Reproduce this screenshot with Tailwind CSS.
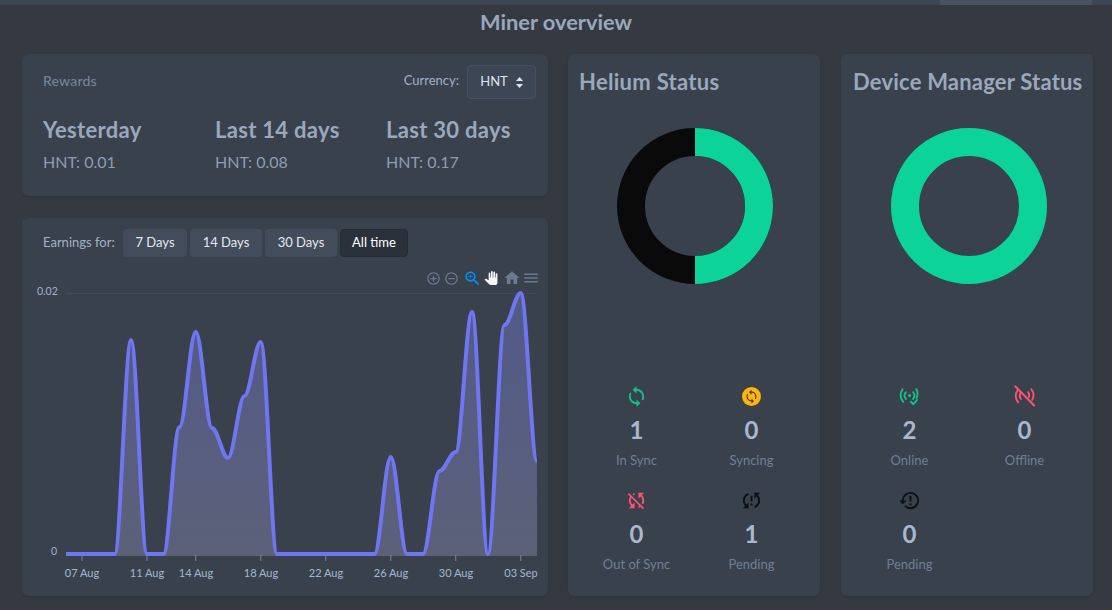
<!DOCTYPE html>
<html lang="en">
<head>
  <meta charset="UTF-8" />
  <title>Miner overview</title>
  <script src="https://cdn.jsdelivr.net/npm/@tailwindcss/browser@4"></script>
</head>
<body class="h-[610px] overflow-hidden bg-[#353a42] font-[family-name:Lato,sans-serif]">

  <!-- top bar -->
  <div class="h-[5px] bg-[#3b4753] pl-[940px]"><div class="h-full w-[152px] bg-[#4a5262]"></div></div>

  <h1 class="h-[49px] pt-[2px] text-center text-[21.8px] leading-[30px] font-bold text-[#9ba8bc]">Miner overview</h1>

  <main class="flex pl-[22px]">
    <div class="flex w-[526px] flex-col gap-[22px]">

      <!-- rewards -->
      <section class="h-[142px] rounded-md bg-[#39414d] pl-[21px] pr-3 pt-[11px] shadow-sm">
        <div class="flex h-[34px] items-center">
          <span class="mb-[3px] text-[14px] font-medium tracking-[.2px] text-[#74849a]">Rewards</span>
          <span class="mb-[2px] ml-auto text-[13px] text-[#a3b1c6]">Currency:</span>
          <div class="ml-2 flex h-[34px] w-[69px] items-center justify-center gap-2 rounded border border-[#465060] bg-[#3d4654] text-[13px] text-[#dfe5ee]">
            HNT
            <svg width="7" height="11" viewBox="0 0 7 11"><path d="M3.5 0 7 4H0zM3.5 11 0 7h7z" fill="#dfe5ee"/></svg>
          </div>
        </div>
        <div class="mt-[16px] grid grid-cols-[172px_171px_1fr]">
          <div>
            <h3 class="text-[22px] leading-[30px] font-bold tracking-[.3px] text-[#9ba8bc]">Yesterday</h3>
            <p class="mt-[5px] text-[16px] leading-[24px] text-[#8e9cb1]">HNT: 0.01</p>
          </div>
          <div>
            <h3 class="text-[22px] leading-[30px] font-bold tracking-[.3px] text-[#9ba8bc]">Last 14 days</h3>
            <p class="mt-[5px] text-[16px] leading-[24px] text-[#8e9cb1]">HNT: 0.08</p>
          </div>
          <div>
            <h3 class="text-[22px] leading-[30px] font-bold tracking-[.3px] text-[#9ba8bc]">Last 30 days</h3>
            <p class="mt-[5px] text-[16px] leading-[24px] text-[#8e9cb1]">HNT: 0.17</p>
          </div>
        </div>
      </section>

      <!-- earnings chart -->
      <section class="h-[378px] rounded-md bg-[#39414d] pt-[11px] shadow-sm">
        <div class="flex h-[28px] items-center pl-[21px] text-[13px]">
          <span class="w-[80px] text-[#a3b1c6]">Earnings for:</span>
          <div class="flex gap-[3px] text-[#e4e9f0]">
            <button class="h-[28px] w-[64px] rounded-sm bg-[#434c5a]">7 Days</button>
            <button class="h-[28px] w-[72px] rounded-sm bg-[#434c5a]">14 Days</button>
            <button class="h-[28px] w-[72px] rounded-sm bg-[#434c5a]">30 Days</button>
            <button class="h-[28px] w-[68px] rounded-sm border border-[#262b33] bg-[#2b313a] text-white">All time</button>
          </div>
        </div>

        <svg class="mt-[5px] block" width="526" height="334" viewBox="22 262 526 334">
          <defs>
            <linearGradient id="area" x1="0" y1="0" x2="0" y2="1">
              <stop offset="0" stop-color="#525a88"/>
              <stop offset="1" stop-color="#5c6179"/>
            </linearGradient>
          </defs>

          <!-- toolbar -->
          <svg x="426" y="271" width="15" height="15" viewBox="0 0 24 24" fill="#6b7a8f"><path d="M13 7h-2v4H7v2h4v4h2v-4h4v-2h-4V7zm-1-5C6.48 2 2 6.48 2 12s4.48 10 10 10 10-4.48 10-10S17.52 2 12 2zm0 18c-4.41 0-8-3.59-8-8s3.59-8 8-8 8 3.59 8 8-3.59 8-8 8z"/></svg>
          <svg x="444" y="271" width="15" height="15" viewBox="0 0 24 24" fill="#6b7a8f"><path d="M7 11v2h10v-2H7zm5-9C6.48 2 2 6.48 2 12s4.48 10 10 10 10-4.48 10-10S17.52 2 12 2zm0 18c-4.41 0-8-3.59-8-8s3.59-8 8-8 8 3.59 8 8-3.59 8-8 8z"/></svg>
          <svg x="463" y="269" width="19" height="19" viewBox="0 0 24 24" fill="#008ffb"><path d="M15.5 14h-.79l-.28-.27C15.41 12.59 16 11.11 16 9.5 16 5.91 13.09 3 9.5 3S3 5.91 3 9.5 5.91 16 9.5 16c1.61 0 3.09-.59 4.23-1.57l.27.28v.79l5 4.99L20.49 19l-4.99-5zm-6 0C7.01 14 5 11.99 5 9.5S7.01 5 9.5 5 14 7.01 14 9.5 11.99 14 9.5 14z"/><path d="M12 10h-2v2H9v-2H7V9h2V7h1v2h2v1z"/></svg>
          <svg x="484" y="271" width="14" height="14" viewBox="0 0 24 24" fill="#f4f6f8"><path d="M23 5.5V20c0 2.2-1.8 4-4 4h-7.3c-1.08 0-2.1-.43-2.85-1.19L1 14.83s1.26-1.23 1.3-1.25c.22-.19.49-.29.79-.29.22 0 .42.06.6.16.04.01 4.31 2.46 4.31 2.46V4c0-.83.67-1.5 1.5-1.5S11 3.17 11 4v7h1V1.5c0-.83.67-1.5 1.5-1.5S15 .67 15 1.5V11h1V2.5c0-.83.67-1.5 1.5-1.5s1.5.67 1.5 1.5V11h1V5.5c0-.83.67-1.5 1.5-1.5s1.5.67 1.5 1.5z"/></svg>
          <svg x="503" y="269" width="18" height="18" viewBox="0 0 24 24" fill="#6b7a8f"><path d="M10 20v-6h4v6h5v-8h3L12 3 2 12h3v8z"/></svg>
          <svg x="522" y="269" width="18" height="18" viewBox="0 0 24 24" fill="#6b7a8f"><path d="M3 18h18v-2H3v2zm0-5h18v-2H3v2zm0-7v2h18V6H3z"/></svg>

          <!-- grid and axes -->
          <line x1="66" y1="293.5" x2="537" y2="293.5" stroke="#434b58"/>
          <line x1="66" y1="555" x2="537" y2="555" stroke="#7f8794"/>
          <g stroke="#7f8794">
            <line x1="82" y1="555" x2="82" y2="561"/>
            <line x1="147" y1="555" x2="147" y2="561"/>
            <line x1="195.75" y1="555" x2="195.75" y2="561"/>
            <line x1="260.75" y1="555" x2="260.75" y2="561"/>
            <line x1="325.75" y1="555" x2="325.75" y2="561"/>
            <line x1="390.75" y1="555" x2="390.75" y2="561"/>
            <line x1="455.75" y1="555" x2="455.75" y2="561"/>
            <line x1="520.75" y1="555" x2="520.75" y2="561"/>
          </g>
          <g font-size="10.5" fill="#a3b1c6">
            <text x="37" y="295">0.02</text>
            <text x="51" y="555">0</text>
          </g>
          <g font-size="11" fill="#a3b8d0" text-anchor="middle">
            <text x="82" y="577">07 Aug</text>
            <text x="147" y="577">11 Aug</text>
            <text x="196" y="577">14 Aug</text>
            <text x="261" y="577">18 Aug</text>
            <text x="326" y="577">22 Aug</text>
            <text x="391" y="577">26 Aug</text>
            <text x="456" y="577">30 Aug</text>
            <text x="521" y="577">03 Sep</text>
          </g>

          <!-- series -->
          <path fill="url(#area)" d="M66 554H114.75C120.45 554 125.3 340 131 340S141.3 554 147 554H163.5C169.2 554 173.8 427 179.5 427S190 332 195.75 332S206.3 428 212 428S222.3 458 228 458S238.8 396 244.5 396S255 342 260.75 342S271.3 554 277 554H374.5C380.2 554 385 457 390.75 457S401.3 554 407 554H423C428.7 554 433.8 471 439.5 471S450 452 455.75 452S466.3 312 472 312S482.3 554 488 554S498.8 325 504.5 325S515 293 520.75 293S531.3 461 537 461V554Z"/>
          <path fill="none" stroke="#7076f2" stroke-width="4" d="M66 554H114.75C120.45 554 125.3 340 131 340S141.3 554 147 554H163.5C169.2 554 173.8 427 179.5 427S190 332 195.75 332S206.3 428 212 428S222.3 458 228 458S238.8 396 244.5 396S255 342 260.75 342S271.3 554 277 554H374.5C380.2 554 385 457 390.75 457S401.3 554 407 554H423C428.7 554 433.8 471 439.5 471S450 452 455.75 452S466.3 312 472 312S482.3 554 488 554S498.8 325 504.5 325S515 293 520.75 293S531.3 461 537 461"/>
        </svg>
      </section>
    </div>

    <!-- helium status -->
    <section class="ml-5 h-[542px] w-[252px] rounded-md bg-[#39414d] pt-[11px] shadow-sm">
      <h2 class="pl-[11px] text-[22px] leading-[34px] font-bold tracking-[.3px] text-[#9ba8bc]">Helium Status</h2>
      <svg class="ml-[49px] mt-[29px] block" width="156" height="156" viewBox="0 0 156 156">
        <circle cx="78" cy="78" r="64" fill="none" stroke="#0a0a0a" stroke-width="28"/>
        <path d="M78 14A64 64 0 0 1 78 142" fill="none" stroke="#0bd39a" stroke-width="28"/>
      </svg>
      <div class="mt-[101px] ml-[11px] grid w-[230px] grid-cols-2 gap-y-[13px] text-center">
        <div class="flex h-[91px] flex-col items-center">
          <svg class="block" width="23" height="23" viewBox="0 0 24 24" fill="#13c08a"><path d="M12,18A6,6 0 0,1 6,12C6,11 6.25,10.03 6.7,9.2L5.24,7.74C4.46,8.97 4,10.43 4,12A8,8 0 0,0 12,20V23L16,19L12,15M12,4V1L8,5L12,9V6A6,6 0 0,1 18,12C18,13 17.75,13.97 17.3,14.8L18.76,16.26C19.54,15.03 20,13.57 20,12A8,8 0 0,0 12,4Z"/></svg>
          <p class="mt-[6px] text-[24px] leading-[32px] font-bold text-[#a9b8cc]">1</p>
          <p class="mt-[4px] text-[13px] leading-[20px] text-[#6f7f95]">In Sync</p>
        </div>
        <div class="flex h-[91px] flex-col items-center">
          <div class="flex h-[23px] items-center">
            <div class="flex h-[19px] w-[19px] items-center justify-center rounded-full bg-[#ffb40a]">
              <svg class="block" width="15" height="15" viewBox="0 0 24 24" fill="#3a424e"><path d="M12,18A6,6 0 0,1 6,12C6,11 6.25,10.03 6.7,9.2L5.24,7.74C4.46,8.97 4,10.43 4,12A8,8 0 0,0 12,20V23L16,19L12,15M12,4V1L8,5L12,9V6A6,6 0 0,1 18,12C18,13 17.75,13.97 17.3,14.8L18.76,16.26C19.54,15.03 20,13.57 20,12A8,8 0 0,0 12,4Z"/></svg>
            </div>
          </div>
          <p class="mt-[6px] text-[24px] leading-[32px] font-bold text-[#a9b8cc]">0</p>
          <p class="mt-[4px] text-[13px] leading-[20px] text-[#6f7f95]">Syncing</p>
        </div>
        <div class="flex h-[91px] flex-col items-center">
          <svg class="block" width="23" height="23" viewBox="0 0 24 24" fill="#f9536e"><path d="M20,4H14V10L16.24,7.76C17.32,8.85 18,10.34 18,12C18,13 17.75,13.94 17.32,14.77L18.78,16.23C19.55,15 20,13.56 20,12C20,9.79 19.09,7.8 17.64,6.36L20,4M2.86,5.41L5.22,7.77C4.45,9 4,10.44 4,12C4,14.21 4.91,16.2 6.36,17.64L4,20H10V14L7.76,16.24C6.68,15.15 6,13.66 6,12C6,11 6.25,10.06 6.68,9.23L14.76,17.31C14.5,17.44 14.26,17.56 14,17.65V19.74C14.79,19.53 15.54,19.2 16.22,18.78L18.58,21.14L19.85,19.87L4.13,4.14L2.86,5.41M10,6.35V4.26C9.2,4.47 8.45,4.8 7.77,5.22L9.23,6.68C9.5,6.56 9.73,6.44 10,6.35Z"/></svg>
          <p class="mt-[6px] text-[24px] leading-[32px] font-bold text-[#a9b8cc]">0</p>
          <p class="mt-[4px] text-[13px] leading-[20px] text-[#6f7f95]">Out of Sync</p>
        </div>
        <div class="flex h-[91px] flex-col items-center">
          <svg class="block" width="23" height="23" viewBox="0 0 24 24" fill="#0d0f12"><path d="M11,13H13V7H11M21,4H15V10L17.24,7.76C18.32,8.85 19,10.34 19,12C19,14.61 17.33,16.83 15,17.65V19.74C18.45,18.85 21,15.73 21,12C21,9.79 20.09,7.8 18.64,6.36M11,17H13V15H11M3,12C3,14.21 3.91,16.2 5.36,17.64L3,20H9V14L6.76,16.24C5.68,15.15 5,13.66 5,12C5,9.39 6.67,7.17 9,6.35V4.26C5.55,5.15 3,8.27 3,12Z"/></svg>
          <p class="mt-[6px] text-[24px] leading-[32px] font-bold text-[#a9b8cc]">1</p>
          <p class="mt-[4px] text-[13px] leading-[20px] text-[#6f7f95]">Pending</p>
        </div>
      </div>
    </section>

    <!-- device manager status -->
    <section class="ml-[21px] h-[542px] w-[252px] rounded-md bg-[#39414d] pt-[11px] shadow-sm">
      <h2 class="pl-3 text-[22px] leading-[34px] font-bold tracking-[.2px] text-[#9ba8bc]">Device Manager Status</h2>
      <svg class="ml-[50px] mt-[29px] block" width="156" height="156" viewBox="0 0 156 156">
        <circle cx="78" cy="78" r="64" fill="none" stroke="#0bd39a" stroke-width="28"/>
      </svg>
      <div class="mt-[101px] ml-[11px] grid w-[230px] grid-cols-2 gap-y-[13px] text-center">
        <div class="flex h-[91px] flex-col items-center">
          <svg class="block" width="23" height="23" viewBox="0 0 24 24" fill="none" stroke="#13c08a" stroke-width="2" stroke-linecap="round">
            <circle cx="12" cy="11" r="1.6" fill="#13c08a" stroke="none"/>
            <path d="M8.2 7.5a5.5 5.5 0 0 0 0 7M15.8 7.5a5.5 5.5 0 0 1 0 7M4.8 4.5a10 10 0 0 0 .6 13M19.2 4.5a10 10 0 0 1 .2 9"/>
            <path d="M13.5 17.5l2.5 2.5 4-4.5"/>
          </svg>
          <p class="mt-[6px] text-[24px] leading-[32px] font-bold text-[#a9b8cc]">2</p>
          <p class="mt-[4px] text-[13px] leading-[20px] text-[#6f7f95]">Online</p>
        </div>
        <div class="flex h-[91px] flex-col items-center">
          <svg class="block" width="23" height="23" viewBox="0 0 24 24" fill="none" stroke="#f9536e" stroke-width="2" stroke-linecap="round">
            <path d="M8.2 8a5.5 5.5 0 0 0 0 6.5M15.8 7.5a5.5 5.5 0 0 1 .8 5M4.8 5.5a10 10 0 0 0 .6 12.5M19.2 4.5a10 10 0 0 1 .8 11"/>
            <path d="M2.5 1.5 22 21.5" stroke-width="2.2"/>
          </svg>
          <p class="mt-[6px] text-[24px] leading-[32px] font-bold text-[#a9b8cc]">0</p>
          <p class="mt-[4px] text-[13px] leading-[20px] text-[#6f7f95]">Offline</p>
        </div>
        <div class="flex h-[91px] flex-col items-center">
          <svg class="block" width="23" height="23" viewBox="0 0 24 24" fill="#0d0f12"><path d="M13 3a9 9 0 0 0-9 9H1l4 4 4-4H6a7 7 0 1 1 2.05 4.95l-1.42 1.42A9 9 0 1 0 13 3z"/><path d="M12 7h2v6h-2zM12 15h2v2h-2z"/></svg>
          <p class="mt-[6px] text-[24px] leading-[32px] font-bold text-[#a9b8cc]">0</p>
          <p class="mt-[4px] text-[13px] leading-[20px] text-[#6f7f95]">Pending</p>
        </div>
      </div>
    </section>
  </main>
</body>
</html>
